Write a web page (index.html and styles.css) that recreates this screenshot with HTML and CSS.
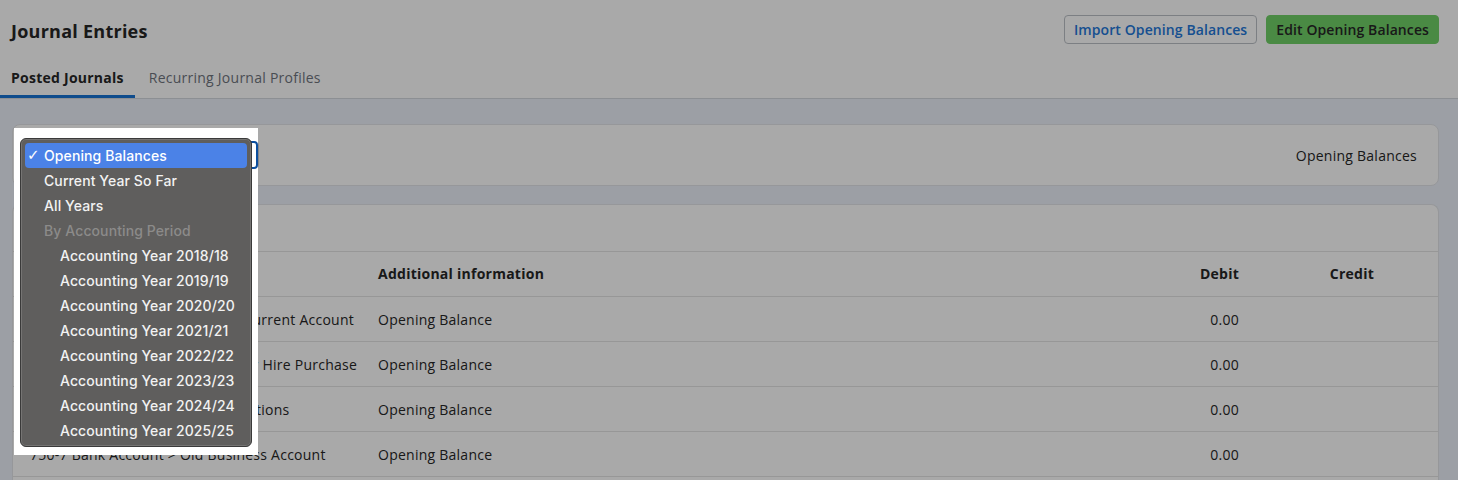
FILE: index.html
```html
<!DOCTYPE html>
<html lang="en">
<head>
    <meta charset="UTF-8">
    <meta name="viewport" content="width=device-width, initial-scale=1.0">
    <title>Journal Entries</title>
    <link rel="stylesheet" href="styles.css">
</head>
<body>
    <header class="page-header">
        <div class="title-row">
            <h1>Journal Entries</h1>
            <div class="actions">
                <button class="btn btn-outline">Import Opening Balances</button>
                <button class="btn btn-green">Edit Opening Balances</button>
            </div>
        </div>
        <nav class="tabs">
            <a class="tab active">Posted Journals</a>
            <a class="tab">Recurring Journal Profiles</a>
        </nav>
    </header>

    <main>
        <section class="card filter-card">
            <div class="period-select">Opening Balances</div>
            <span class="period-label">Opening Balances</span>
        </section>

        <section class="card journal-card">
            <div class="card-head">Opening Balances</div>
            <div class="row row-head">
                <div>Account</div>
                <div>Additional information</div>
                <div class="num">Debit</div>
                <div class="num">Credit</div>
                <div></div>
            </div>
            <div class="row">
                <div>750-1 Bank Account &gt; Business Current Account</div>
                <div>Opening Balance</div>
                <div class="num">0.00</div>
                <div class="num"></div>
                <div></div>
            </div>
            <div class="row">
                <div>750-2 Bank Account &gt; Car Loan or Hire Purchase</div>
                <div>Opening Balance</div>
                <div class="num">0.00</div>
                <div class="num"></div>
                <div></div>
            </div>
            <div class="row">
                <div>750-3 Bank Account &gt; Card Collections</div>
                <div>Opening Balance</div>
                <div class="num">0.00</div>
                <div class="num"></div>
                <div></div>
            </div>
            <div class="row">
                <div>750-7 Bank Account &gt; Old Business Account</div>
                <div>Opening Balance</div>
                <div class="num">0.00</div>
                <div class="num"></div>
                <div></div>
            </div>
            <div class="row">
                <div>1100 Capital Account</div>
                <div>Opening Balance</div>
                <div class="num"></div>
                <div class="num">0.00</div>
                <div></div>
            </div>
        </section>
    </main>

    <!-- modal dim + open period dropdown -->
    <div class="dim"></div>
    <div class="popup">
        <div class="select-ring"></div>
        <ul class="menu">
            <li class="selected"><span class="check">✓</span>Opening Balances</li>
            <li>Current Year So Far</li>
            <li>All Years</li>
            <li class="disabled">By Accounting Period</li>
            <li class="sub">Accounting Year 2018/18</li>
            <li class="sub">Accounting Year 2019/19</li>
            <li class="sub">Accounting Year 2020/20</li>
            <li class="sub">Accounting Year 2021/21</li>
            <li class="sub">Accounting Year 2022/22</li>
            <li class="sub">Accounting Year 2023/23</li>
            <li class="sub">Accounting Year 2024/24</li>
            <li class="sub">Accounting Year 2025/25</li>
        </ul>
    </div>
</body>
</html>
```

FILE: styles.css
```css
body {
    font-family: "Open Sans", Arial, sans-serif;
    margin: 0;
    padding: 0;
    background: #ecf0f9;
    color: #262626;
    font-size: 14px;
    letter-spacing: 0.25px;
}

.page-header {
    background: white;
}

.title-row {
    display: flex;
    justify-content: space-between;
    align-items: flex-start;
    height: 62px;
    box-sizing: border-box;
    padding: 15px 19px 0 11px;
}

.title-row h1 {
    margin: 4px 0 0;
    font-size: 18px;
    line-height: 24px;
    font-weight: 700;
}

.actions {
    display: flex;
    gap: 9px;
}

.btn {
    font-family: inherit;
    font-size: 14px;
    font-weight: 600;
    letter-spacing: 0.1px;
    height: 29px;
    padding: 0 9px;
    border-radius: 4px;
    cursor: pointer;
}

.btn-outline {
    background: white;
    color: #2377d9;
    border: 1px solid #bcc0c6;
}

.btn-green {
    background: #70d067;
    color: #262626;
    border: 1px solid #70d067;
}

.tabs {
    display: flex;
    border-bottom: 1px solid #d4d8de;
}

.tab {
    padding: 6px 11px 8px;
    line-height: 19px;
    border-bottom: 3px solid transparent;
    color: #6f757e;
    cursor: pointer;
}

.tab + .tab {
    margin-left: 3px;
}

.tab.active {
    color: #262626;
    font-weight: 700;
    border-bottom-color: #1773d4;
}

main {
    padding: 25px 19px 0 12px;
}

.card {
    background: white;
    border: 1px solid #e2e4e8;
    border-radius: 8px;
}

.filter-card {
    display: flex;
    justify-content: space-between;
    align-items: center;
    padding: 16px 21px 16px 17px;
}

.period-select {
    width: 229px;
    height: 28px;
    box-sizing: border-box;
    border: 1px solid #c9ccd2;
    border-radius: 4px;
    padding: 0 8px;
    line-height: 26px;
}

.journal-card {
    margin-top: 18px;
    border-bottom: none;
    border-radius: 8px 8px 0 0;
}

.card-head {
    height: 46px;
    line-height: 46px;
    padding: 0 17px;
    font-weight: 700;
    border-bottom: 1px solid #e4e4e4;
}

.row {
    display: grid;
    grid-template-columns: 348px 1fr 150px 135px 47px;
    height: 44px;
    align-items: center;
    border-bottom: 1px solid #e4e4e4;
}

.row > div {
    padding: 0 17px;
    white-space: nowrap;
}

.row-head {
    font-weight: 700;
    padding-bottom: 2px;
    height: 42px;
}

.num {
    text-align: right;
}

.dim {
    position: fixed;
    inset: 0;
    background: rgba(0, 0, 0, 0.337);
}

.popup {
    position: absolute;
    left: 14px;
    top: 128px;
    width: 244px;
    height: 327px;
    background: white;
}

.select-ring {
    position: absolute;
    left: 13px;
    top: 13px;
    width: 231px;
    height: 28px;
    box-sizing: border-box;
    border: 2px solid #0c4f9e;
    border-radius: 4px;
}

.menu {
    position: absolute;
    left: 6px;
    top: 10px;
    width: 232px;
    height: 309px;
    box-sizing: border-box;
    margin: 0;
    padding: 4px;
    list-style: none;
    background: #5f5e5d;
    border: 1px solid #3a3a3a;
    border-radius: 6px;
    box-shadow: inset 0 0 0 1px #757473;
    font-family: Inter, "DejaVu Sans", sans-serif;
    font-size: 14px;
    font-weight: 500;
    letter-spacing: 0.1px;
    color: #f2f2f2;
}

.menu li {
    position: relative;
    height: 25px;
    line-height: 25px;
    padding-left: 19px;
    border-radius: 4px;
    white-space: nowrap;
}

.menu li.sub {
    padding-left: 35px;
}

.menu li.selected {
    background: #4b82e7;
    color: white;
}

.menu li.disabled {
    color: #8c8b8a;
}

.check {
    position: absolute;
    left: 2px;
    font-family: "DejaVu Sans", sans-serif;
    font-size: 15px;
}
```
